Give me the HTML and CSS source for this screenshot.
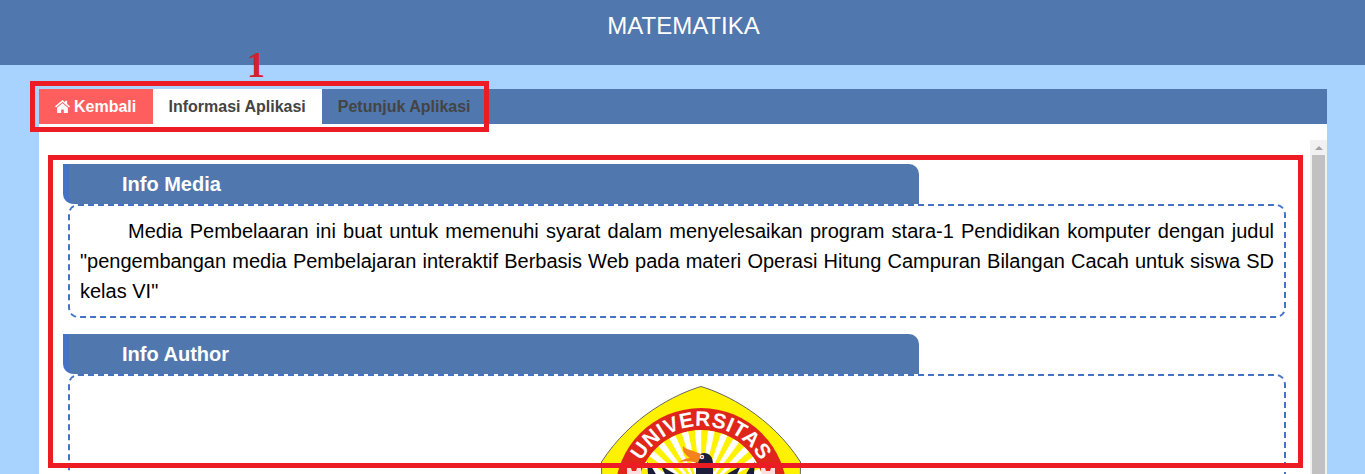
FILE: index.html
```html
<!DOCTYPE html>
<html lang="id">
<head>
  <meta charset="UTF-8" />
  <title>Matematika</title>
  <link rel="stylesheet" href="styles.css">
</head>
<body>
  <header class="top">MATEMATIKA</header>

  <div class="wrap">
    <nav class="tabs">
      <a class="tab tab-back">
        <svg class="home" viewBox="0 0 16 14"><path d="M8 0 0 6.700l1 1.300L8 2.200 15 8l1-1.300-3-2.500V.8h-2.200v1.600zM2.200 8.300V14h4.400v-3.800h2.800V14h4.400V8.300L8 3.500z"/></svg>
        Kembali
      </a>
      <a class="tab tab-on">Informasi Aplikasi</a>
      <a class="tab">Petunjuk Aplikasi</a>
    </nav>

    <main class="panel">
      <div class="scroll">
        <h3 class="head">Info Media</h3>
        <div class="box">
          <p>Media Pembelaaran ini buat untuk memenuhi syarat dalam menyelesaikan program stara-1 Pendidikan komputer dengan judul "pengembangan media Pembelajaran interaktif Berbasis Web pada materi Operasi Hitung Campuran Bilangan Cacah untuk siswa SD kelas VI"</p>
        </div>

        <h3 class="head">Info Author</h3>
        <div class="box box-logo">
          <svg class="logo" viewBox="0 0 200 200">
            <defs>
              <clipPath id="inner"><circle cx="100" cy="108" r="64"/></clipPath>
              <path id="arc" d="M32 108A68 68 0 0 1 168 108"/>
            </defs>
            <path d="M100 .5C75 8 30 30 .5 76L2 200H198L199.500 76C170 30 125 8 100 .5z" fill="#fff200" stroke="#666" stroke-width="1"/>
            <circle cx="100" cy="108" r="86" fill="#e0251b"/>
            <circle cx="100" cy="108" r="64" fill="#fff200"/>
            <circle cx="100" cy="108" r="32" fill="none" stroke="#fff" stroke-width="64" stroke-dasharray="3.35 3.35" clip-path="url(#inner)"/>
            <text class="logo-text"><textPath href="#arc" startOffset="50%" text-anchor="middle">UNIVERSITAS</textPath></text>
            <!-- burung -->
            <path d="M46 76C50 80 54 84 60 100H48zM154 76C150 80 146 84 140 100H152z" fill="#1d1d3a"/>
            <path d="M60 80 74 88 90 92 86 100 68 96zM140 80 126 88 110 92 114 100 132 96z" fill="#1d1d3a"/>
            <path d="M95 72C100 64 112 65 112 78V100H95z" fill="#1d1d3a"/>
            <path d="M82 60C85 64 92 64 100 68L99 73 89 72C84 69 81 65 82 60z" fill="#f58220"/>
            <path d="M78 76C83 72 90 71 99 72L97 77C90 75 84 75 78 76z" fill="#f58220"/>
            <circle cx="101" cy="71" r="2.200" fill="#fff"/>
            <circle cx="101" cy="71" r="1.100" fill="#e0251b"/>
            <path d="M26 82h4l1 3h4l1-3h4v8H26zM160 82h4l1 3h4l1-3h4v8h-14z" fill="#fff" opacity=".85"/>
          </svg>
        </div>
      </div>
      <div class="bar"><span class="bar-up"></span><span class="bar-thumb"></span></div>
    </main>
  </div>

  <!-- tanda merah di atas halaman -->
  <div class="mark mark-tabs"></div>
  <div class="mark mark-body"></div>
  <div class="mark-num">1</div>
</body>
</html>
```

FILE: styles.css
```css
html, body {
  height: 100%;
}

body {
  margin: 0;
  overflow: hidden;
  background: #a8d2ff;
  font-family: "Liberation Sans", Arial, sans-serif;
  color: #000;
}

.top {
  height: 65px;
  box-sizing: border-box;
  padding: 12px 0 0 2px;
  background: #5077ae;
  color: #fff;
  text-align: center;
  font-size: 24px;
  line-height: 28px;
}

.wrap {
  margin: 24px 38px 0 39px;
}

.tabs {
  display: flex;
  height: 35px;
  background: #5077ae;
}

.tab {
  display: flex;
  align-items: center;
  padding: 0 16px;
  font-size: 16px;
  font-weight: bold;
  color: #444;
}

.tab-back {
  padding-right: 16.3px;
  background: #ff5e5e;
  color: #fff;
  gap: 4px;
}

.tab-on {
  background: #fff;
}

.home {
  width: 15px;
  height: 13px;
  fill: #fff;
}

.panel {
  display: flex;
  height: 350px;
  box-sizing: border-box;
  padding: 16px 0 0 24px;
  background: #fff;
}

.scroll {
  flex: 1;
  padding-top: 24px;
  overflow: hidden;
}

.head {
  width: 856px;
  height: 40px;
  margin: 0;
  box-sizing: border-box;
  padding-left: 53px;
  border-left: 6px solid #4472c4;
  border-radius: 0 10px 0 10px;
  background: #5077ae;
  color: #fff;
  font-size: 20px;
  line-height: 40px;
}

.box {
  margin: 0 24px 16px 5px;
  padding: 10px;
  border: 2px dashed #4472c4;
  border-radius: 10px;
  font-size: 20px;
  line-height: 30px;
}

.box p {
  margin: 0;
  text-align: justify;
  text-indent: 48px;
}

.logo {
  display: block;
  width: 200px;
  height: 200px;
  margin-left: 521px;
}

.logo-text {
  font-size: 21px;
  font-weight: bold;
  fill: #fff;
  letter-spacing: .5px;
}

.bar {
  display: flex;
  flex-direction: column;
  align-items: center;
  width: 17px;
  background: #f1f1f1;
}

.bar-up {
  width: 0;
  height: 0;
  margin: 6px 0 5px;
  border: 4px solid transparent;
  border-top: 0;
  border-bottom-color: #a3a3a3;
}

.bar-thumb {
  flex: 1;
  width: 13px;
  background: #c1c1c1;
}

.mark {
  position: absolute;
  box-sizing: border-box;
  border: 5px solid #ed1c24;
}

.mark-tabs {
  left: 30px;
  top: 81px;
  width: 459px;
  height: 51px;
}

.mark-body {
  left: 48px;
  top: 155px;
  width: 1255px;
  height: 313px;
}

.mark-num {
  position: absolute;
  left: 247px;
  top: 45px;
  color: #d2232a;
  font-family: "Liberation Serif", serif;
  font-size: 36px;
  font-weight: bold;
  line-height: 40px;
}
```
